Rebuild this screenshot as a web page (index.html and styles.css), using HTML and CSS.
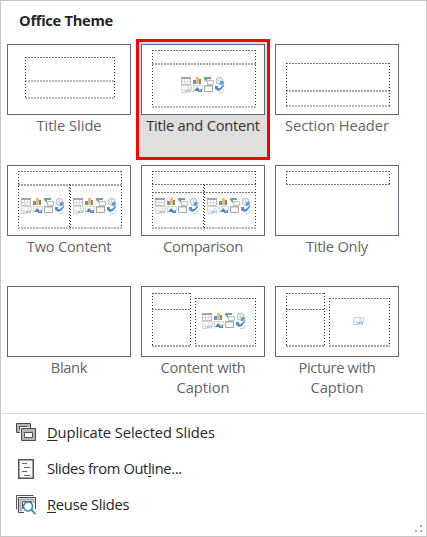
FILE: index.html
```html
<!DOCTYPE html>
<html lang="en">
<head>
<meta charset="utf-8">
<title>Office Theme</title>
<link rel="stylesheet" href="styles.css">
</head>
<body>
<svg class="defs" width="0" height="0" aria-hidden="true">
  <defs>
    <g id="picture">
      <path d="M.5 7.5V.5H10.5V5" fill="#fafafa" stroke="#d2d2d2"/>
      <path d="M.5 7.5H5" stroke="#c9c9c9"/>
      <path d="M1 6L3 4L6 6Z" fill="#c0daef"/>
      <circle cx="7.5" cy="2.5" r="1" fill="#f2cf9c"/>
      <path d="M4 7.3L6 4.5H10V7.3Z" fill="#8fb9e3"/>
      <path d="M7 6H9" stroke="#e8f1fa"/>
    </g>
    <g id="content" opacity=".88">
      <path d="M.5 .5H9.5V7.5H.5Z" fill="#fff" stroke="#b5b5b5"/>
      <path d="M0 1H10" stroke="#999" stroke-width="2"/>
      <path d="M3.5 2V8M6.5 2V8M1 4.5H9" stroke="#d5d5d5"/>
      <path d="M12 3H15V7H12Z" fill="#4e87c2"/>
      <path d="M15 0H18V7H15Z" fill="#e9b45c"/>
      <path d="M18 2H20V7H18Z" fill="#777"/>
      <path d="M23 0H30V2H26V5L23 2Z" fill="#5b9c7c"/>
      <path d="M26.500 3.500H32.500V7.500H26.500Z" fill="#f8f8f8" stroke="#a8c0b4"/>
      <circle cx="38.500" cy="3.800" r="3.500" fill="#f7f7f7" stroke="#adadad"/>
      <path d="M35 4H42M38.500 0V7" stroke="#d0d0d0"/>
      <path d="M39 5L41 3.500L43.500 5.500L41 8H39Z" fill="#4b91d2"/>
      <use href="#picture" y="8"/>
      <path d="M12.500 15.500V8.500H21.500V13" fill="#fafafa" stroke="#d2d2d2"/>
      <path d="M13 14L16 10L18 12L21 12V15H17V14Z" fill="#347bbd"/>
      <path d="M18 13H20" stroke="#d9e9f8"/>
      <path d="M23.500 8.500H31.500V14.500H23.500Z" fill="#fafafa" stroke="#999"/>
      <path d="M24 9H31" stroke="#aaa"/>
      <path d="M34 9H37V11L39 11L43 7L43 9L40 13L37 14L34 12Z" fill="#3c83c6"/>
      <path d="M38 15.500H41.500L43 12" fill="none" stroke="#c9c9c9"/>
    </g>
  </defs>
</svg>
<main class="panel">
  <h1 class="heading">Office Theme</h1>
  <section class="gallery">
    <figure class="layout">
      <svg class="thumb" viewBox="0 0 124 71">
        <path class="h" d="M18 13.500H108"/><path class="h soft" d="M18 37H108M18 54H108"/>
        <path class="v" d="M18.500 13V54M107.500 13V54"/>
      </svg>
      <figcaption class="loose">Title Slide</figcaption>
    </figure>
    <figure class="layout selected">
      <svg class="thumb" viewBox="0 0 124 71">
        <path class="h" d="M11 6.500H115"/><path class="h mid" d="M11 20H115"/><path class="h soft" d="M11 63H115"/>
        <path class="v" d="M11.500 6V63M114.500 6V63"/>
        <use href="#content" x="40" y="33"/>
      </svg>
      <figcaption>Title and Content</figcaption>
    </figure>
    <figure class="layout">
      <svg class="thumb" viewBox="0 0 124 71">
        <path class="h" d="M11 19.500H115"/><path class="h mid" d="M11 47H115"/><path class="h soft" d="M11 62H115"/>
        <path class="v" d="M11.500 19V62M114.500 19V62"/>
      </svg>
      <figcaption class="loose">Section Header</figcaption>
    </figure>
    <figure class="layout">
      <svg class="thumb" viewBox="0 0 124 71">
        <path class="h" d="M11 6.500H115"/><path class="h mid" d="M11 20H115"/><path class="h soft" d="M11 63H115"/>
        <path class="v" d="M11.500 6V63M114.500 6V63M62.500 19V63"/><path class="v" d="M63.500 20V63"/>
        <use href="#content" x="14" y="33"/><use href="#content" x="66" y="33"/>
      </svg>
      <figcaption>Two Content</figcaption>
    </figure>
    <figure class="layout">
      <svg class="thumb" viewBox="0 0 124 71">
        <path class="h" d="M11 6.500H115M11 19.500H115M11 27.500H115"/><path class="h soft" d="M11 63H115"/>
        <path class="v" d="M11.500 6V63M114.500 6V63M62.500 19V63"/><path class="v" d="M63.500 20V63"/>
        <use href="#content" x="14" y="33"/><use href="#content" x="66" y="33"/>
      </svg>
      <figcaption class="tight">Comparison</figcaption>
    </figure>
    <figure class="layout">
      <svg class="thumb" viewBox="0 0 124 71">
        <path class="h" d="M11 6.500H115M11 19.500H115"/><path class="v" d="M11.500 6V19M114.500 6V19"/>
      </svg>
      <figcaption>Title Only</figcaption>
    </figure>
    <figure class="layout">
      <svg class="thumb" viewBox="0 0 124 71"></svg>
      <figcaption class="tight">Blank</figcaption>
    </figure>
    <figure class="layout">
      <svg class="thumb" viewBox="0 0 124 71">
        <path class="h" d="M11 7.500H50M11 23.500H50M54 12.500H115"/><path class="h mid" d="M11 60H50M54 60H115"/>
        <path class="v" d="M11.500 7V60M49.500 7V60M54.500 12V60M114.500 12V60"/>
        <use href="#content" x="61" y="27"/>
      </svg>
      <figcaption>Content with<br><span class="loose">Caption</span></figcaption>
    </figure>
    <figure class="layout">
      <svg class="thumb" viewBox="0 0 124 71">
        <path class="h" d="M11 7.500H50M11 23.500H50M54 12.500H115"/><path class="h mid" d="M11 60H50M54 60H115"/>
        <path class="v" d="M11.500 7V60M49.500 7V60M54.500 12V60M114.500 12V60"/>
        <use href="#picture" x="78" y="31"/>
      </svg>
      <figcaption class="tight">Picture with<br><span class="loose">Caption</span></figcaption>
    </figure>
  </section>
  <nav class="menu">
    <a class="item">
      <svg class="icon" viewBox="0 0 20 20" fill="none">
        <path d="M.5 .5H14.500V5M.5 .5V9.500H4" stroke="#484848"/>
        <path d="M1 1H14V4H4V9H1Z" fill="#b5b5b5"/>
        <path d="M3.500 7V3.500H11.500" stroke="#555"/>
        <path d="M5.500 5.500H19.500V17.500H5.500Z" fill="#b5b5b5" stroke="#484848"/>
        <path d="M8.500 9.500H16.500V14.500H8.500Z" fill="#fff" stroke="#555"/>
      </svg>
      <span class="label loose"><u>D</u>uplicate Selected Slides</span>
    </a>
    <a class="item">
      <svg class="icon" viewBox="0 0 20 20" fill="none">
        <path d="M2.750 .75H17.250V19.250H2.750Z" fill="#f8f8f8" stroke="#555" stroke-width="1.500"/>
        <path d="M6 4.500H11M8 8.500H14M6 12.500H11M8 16.500H14" stroke="#666"/>
      </svg>
      <span class="label tight">Slides from Out<u>l</u>ine...</span>
    </a>
    <a class="item">
      <svg class="icon" viewBox="0 0 20 20" fill="none">
        <path d="M.5 14.500V.5H17.500" stroke="#555"/>
        <path d="M8 17.500H2.500V2.500H19.500V14" stroke="#484848"/>
        <path d="M6 15.500H4.500V4.500H17.500V8" stroke="#aaa" stroke-width="2"/>
        <path d="M7 13.500H6.500V6.500H15.500V8" stroke="#555"/>
        <circle cx="12" cy="11.500" r="4.500" fill="#fff" stroke="#3791cf" stroke-width="1.700"/>
        <path d="M15 14.500L19.500 19" stroke="#3791cf" stroke-width="1.800"/>
      </svg>
      <span class="label"><u>R</u>euse Slides</span>
    </a>
  </nav>
  <svg class="grip" viewBox="0 0 7 7"><path d="M5 0H7V2H5ZM0 5H2V7H0ZM5 5H7V7H5Z" fill="#a6a6a6"/></svg>
</main>
</body>
</html>
```
FILE: styles.css
```css
* { box-sizing: border-box; }
body { margin: 0; background: #fff; }
.defs { position: absolute; }
.panel {
  position: relative;
  width: 427px;
  height: 537px;
  border: 1px solid #c6c6c6;
  background: #fff;
  color: #262626;
  font: 14.7px/20px "Open Sans", "Noto Sans", sans-serif;
  letter-spacing: -0.23px;
}
.loose { letter-spacing: -0.03px; }
.tight { letter-spacing: -0.36px; }
.heading {
  height: 38px;
  margin: 0;
  padding: 9px 0 0 18px;
  font-size: 14.7px;
  line-height: 20px;
  font-weight: 700;
  letter-spacing: -0.3px;
}
.gallery {
  display: grid;
  grid-template-columns: repeat(3, 134px);
  grid-auto-rows: 121px;
  margin-left: 1px;
}
.layout {
  margin: 0;
  padding: 5px 0 0 5px;
  color: #666;
}
.selected {
  padding: 2px 0 0 2px;
  border: 3px solid #f00;
  background: #e1dfdd;
  color: #333;
}
.thumb {
  display: block;
  width: 124px;
  height: 71px;
  outline: 1px solid #5b6880;
  outline-offset: -1px;
  background: #fff;
}
.layout figcaption {
  width: 124px;
  text-align: center;
  white-space: nowrap;
}
.h { stroke: #777; stroke-dasharray: 2 1; }
.mid { stroke: #a5a5a5; stroke-width: 2; }
.soft { stroke: #b9b9b9; stroke-width: 2; }
.v { stroke: #333; stroke-dasharray: 1 2; }
.menu {
  margin: 11px 1px 0;
  border-top: 1px solid #dcdcdc;
}
.item {
  display: flex;
  align-items: center;
  gap: 11px;
  height: 36px;
  padding-left: 14px;
}
.label { padding-bottom: 2px; }
.item .loose { letter-spacing: -0.08px; }
.item:first-child { margin-top: 1px; }
.icon { width: 20px; height: 20px; }
.item u { text-underline-offset: 2px; text-decoration-thickness: 1px; }
.grip {
  position: absolute;
  right: 4px;
  bottom: 4px;
  width: 7px;
  height: 7px;
}
```
